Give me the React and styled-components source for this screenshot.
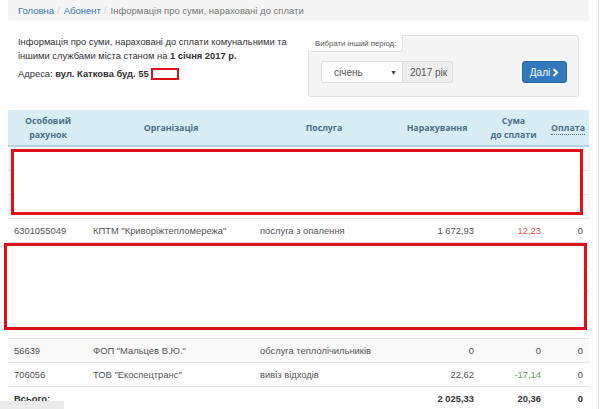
import React from "react";
import styled, { createGlobalStyle } from "styled-components";

const Global = createGlobalStyle`
  html, body { margin: 0; padding: 0; background: #fff; }
  body { font-family: "Liberation Sans", Arial, sans-serif; color: #333; }
  * { box-sizing: border-box; }
`;

const Page = styled.div`
  width: 599px;
  height: 409px;
  overflow: hidden;
  padding-left: 8px;
  border-right: 1px solid #e6e6e6;
  position: relative;
`;

const Content = styled.div`
  width: 581px;
`;

const Breadcrumb = styled.nav`
  height: 21px;
  background: #f5f5f5;
  display: flex;
  align-items: center;
  padding: 0 10px;
  font-size: 9.5px;
  border-radius: 0 0 3px 3px;
`;

const Crumb = styled.span`
  color: ${(p) => (p.$active ? "#777" : "#337ab7")};
`;

const Sep = styled.span`
  color: #ccc;
  padding: 0 4px 0 3px;
`;

const InfoRow = styled.div`
  display: flex;
  margin-top: 14px;
`;

const InfoCol = styled.div`
  width: 300px;
  padding-left: 10px;
  font-size: 9.4px;
  line-height: 14px;
  color: #333;
`;

const Para = styled.p`
  margin: 0 0 4px;
`;

const Redact = styled.span`
  display: inline-block;
  vertical-align: middle;
  width: 28px;
  height: 12px;
  border: 2px solid #e0101a;
  background: #fff;
  margin-left: -3px;
  position: relative;
  top: -1px;
`;

const Panel = styled.div`
  width: 271px;
  height: 62px;
  background: #f5f5f5;
  border: 1px solid #e3e3e3;
  border-radius: 3px;
`;

const PanelLabel = styled.div`
  width: 95px;
  height: 17px;
  background: #fff;
  border-right: 1px solid #e3e3e3;
  border-bottom: 1px solid #e3e3e3;
  border-radius: 3px 0 3px 0;
  margin: -1px 0 0 -1px;
  display: flex;
  align-items: center;
  padding-left: 7px;
  font-size: 7.8px;
  color: #555;
`;

const FormRow = styled.div`
  display: flex;
  align-items: center;
  padding: 0 11px 0 12px;
  margin-top: 9px;
`;

const Select = styled.div`
  width: 82px;
  height: 22px;
  background: #fff;
  border: 1px solid #ddd;
  border-radius: 3px 0 0 3px;
  display: flex;
  align-items: center;
  justify-content: space-between;
  padding: 0 5px 0 12px;
  font-size: 10px;
  color: #555;
`;

const Caret = styled.span`
  font-size: 7px;
  color: #444;
`;

const Addon = styled.div`
  width: 50px;
  height: 22px;
  background: #eee;
  border: 1px solid #ddd;
  border-left: none;
  border-radius: 0 3px 3px 0;
  display: flex;
  align-items: center;
  padding-left: 7px;
  font-size: 10px;
  color: #555;
`;

const Button = styled.button`
  margin-left: auto;
  width: 45px;
  height: 22px;
  background: #3178bd;
  border: 1px solid #2a67a3;
  border-radius: 3px;
  color: #fff;
  font-family: "Liberation Sans", Arial, sans-serif;
  font-size: 10px;
  display: flex;
  align-items: center;
  justify-content: center;
  gap: 2px;
  padding: 0;
`;

const TableWrap = styled.div`
  position: relative;
  margin-top: 13px;
`;

const Table = styled.table`
  width: 581px;
  border-collapse: collapse;
  table-layout: fixed;
`;

const Th = styled.th`
  height: 36px;
  background: #d9edf7;
  border-bottom: 2px solid #b5d3e3;
  font-family: "Open Sans", "DejaVu Sans", sans-serif;
  font-weight: 700;
  font-size: 8.8px;
  line-height: 14px;
  color: #4b6f8b;
  text-align: center;
  padding: 0 4px;
`;

const Dotted = styled.span`
  border-bottom: 1px dotted #4b6f8b;
`;

const Tr = styled.tr`
  background: ${(p) => (p.$striped ? "#f9f9f9" : "#fff")};
`;

const Td = styled.td`
  height: 24px;
  border-top: 1px solid #e2e2e2;
  padding: 0 6px 0 ${(p) => (p.$pl ? p.$pl : 6)}px;
  font-size: 9.4px;
  color: ${(p) => p.$color || "#555"};
  font-weight: ${(p) => (p.$bold ? 700 : 400)};
  text-align: ${(p) => (p.$right ? "right" : "left")};
  white-space: nowrap;
  overflow: hidden;
`;

const RedBox = styled.div`
  position: absolute;
  left: ${(p) => p.$left}px;
  top: ${(p) => p.$top}px;
  width: ${(p) => p.$w}px;
  height: ${(p) => p.$h}px;
  border: 3px solid #e0101a;
  background: #fff;
`;

const StatusBar = styled.div`
  position: absolute;
  left: 0;
  bottom: 0;
  width: 64px;
  height: 8px;
  background: #ebebeb;
`;

const Chevron = () => (
  <svg width="7" height="9" viewBox="0 0 7 9">
    <path d="M1.5 1 L5 4.5 L1.5 8" fill="none" stroke="#fff" strokeWidth="2" />
  </svg>
);

const rows = [
  { blank: true },
  { blank: true },
  { blank: true },
  { acc: "6301055049", org: "КПТМ \"Криворіжтепломережа\"", svc: "послуга з опалення", charge: "1 672,93", due: "12,23", dueColor: "#d9534f", paid: "0" },
  { blank: true },
  { blank: true },
  { blank: true },
  { blank: true },
  { acc: "56639", org: "ФОП \"Мальцев В.Ю.\"", svc: "обслуга теплолічильників", charge: "0", due: "0", paid: "0" },
  { acc: "706056", org: "ТОВ \"Екоспецтранс\"", svc: "вивіз відходів", charge: "22,62", due: "-17,14", dueColor: "#5ea24a", paid: "0" },
];

export default function App() {
  return (
    <>
      <Global />
      <Page>
        <Content>
          <Breadcrumb>
            <Crumb>Головна</Crumb>
            <Sep>/</Sep>
            <Crumb>Абонент</Crumb>
            <Sep>/</Sep>
            <Crumb $active>Інформація про суми, нараховані до сплати</Crumb>
          </Breadcrumb>
          <InfoRow>
            <InfoCol>
              <Para>
                Інформація про суми, нараховані до сплати комунальними та іншими службами міста станом на <b>1 січня 2017 р.</b>
              </Para>
              <Para>
                Адреса: <b>вул. Каткова буд. 55 (</b>
                <Redact />
              </Para>
            </InfoCol>
            <Panel>
              <PanelLabel>Вибрати інший період:</PanelLabel>
              <FormRow>
                <Select>
                  <span>січень</span>
                  <Caret>▼</Caret>
                </Select>
                <Addon>2017 рік</Addon>
                <Button>
                  Далі <Chevron />
                </Button>
              </FormRow>
            </Panel>
          </InfoRow>
          <TableWrap>
            <Table>
              <colgroup>
                <col style={{ width: 80 }} />
                <col style={{ width: 166 }} />
                <col style={{ width: 140 }} />
                <col style={{ width: 86 }} />
                <col style={{ width: 67 }} />
                <col style={{ width: 42 }} />
              </colgroup>
              <thead>
                <tr>
                  <Th>Особовий<br />рахунок</Th>
                  <Th>Організація</Th>
                  <Th>Послуга</Th>
                  <Th>Нарахування</Th>
                  <Th>Сума<br />до сплати</Th>
                  <Th><Dotted>Оплата</Dotted></Th>
                </tr>
              </thead>
              <tbody>
                {rows.map((r, i) => (
                  <Tr key={i} $striped={i % 2 === 0}>
                    <Td>{r.acc}</Td>
                    <Td $pl={5}>{r.org}</Td>
                    <Td>{r.svc}</Td>
                    <Td $right>{r.charge}</Td>
                    <Td $right $color={r.dueColor}>{r.due}</Td>
                    <Td $right>{r.paid}</Td>
                  </Tr>
                ))}
                <Tr>
                  <Td $bold $color="#333">Всього:</Td>
                  <Td />
                  <Td />
                  <Td $right $bold $color="#333">2 025,33</Td>
                  <Td $right $bold $color="#333">20,36</Td>
                  <Td $right $bold $color="#333">0</Td>
                </Tr>
              </tbody>
            </Table>
            <RedBox $left={3} $top={39} $w={572} $h={66} />
            <RedBox $left={-4} $top={133} $w={583} $h={87} />
          </TableWrap>
        </Content>
        <StatusBar />
      </Page>
    </>
  );
}
